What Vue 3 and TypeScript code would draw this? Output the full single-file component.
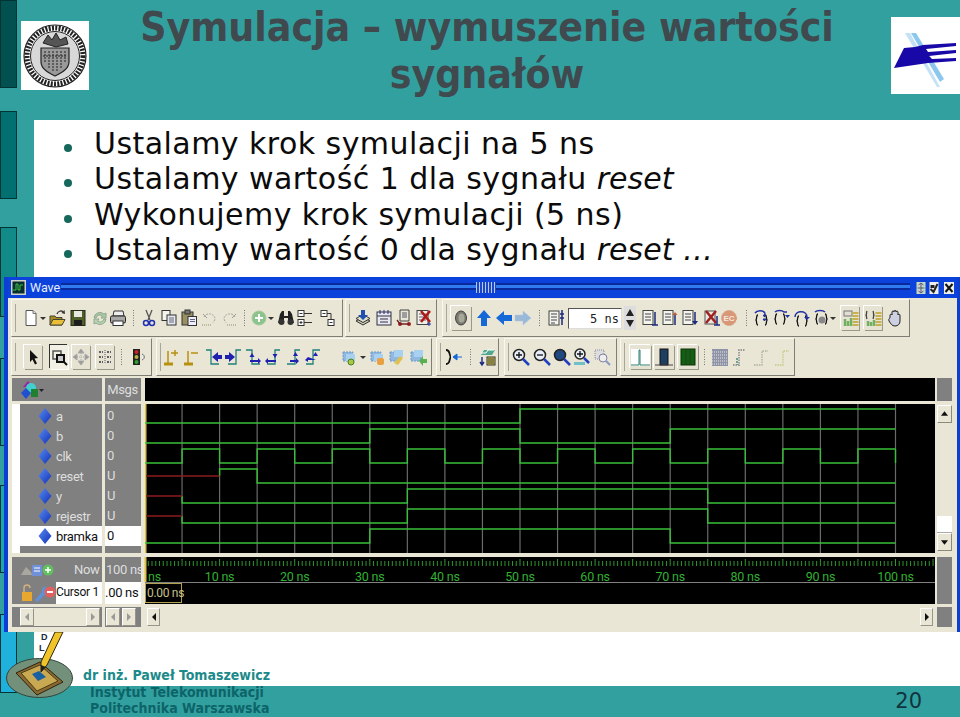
<script setup lang="ts">
interface Item { x: number; i: string; w?: number; c?: string }
interface Group { x: number; end: number; items: Item[] }

const I: Record<string, string> = {
  new: '<path d="M4 1.500h7l3 3v12H4z" fill="#fff" stroke="#555"/><path d="M11 1.500v3h3" fill="#ddd" stroke="#777"/>',
  drop: '<path d="M1 8h6l-3 3z" fill="#333"/>',
  open: '<path d="M2 7h5l1 1.500h6V16H2z" fill="#a88a20" stroke="#443"/><path d="M5 10.500h12l-3 5.500H2z" fill="#e9bf3a" stroke="#443"/><path d="M9 5c1-3 4-3.500 6-2.500" fill="none" stroke="#333" stroke-width="1.300"/><path d="M16.500 1l.5 4-3.500-1z" fill="#333"/>',
  save: '<rect x="2" y="1.500" width="14" height="15" fill="#4f5f2a" stroke="#2a2a1a"/><rect x="5" y="2" width="8" height="6" fill="#e8e8e0"/><rect x="5" y="11" width="8" height="5.500" fill="#1c1c1c"/>',
  reload: '<path d="M3 9a6 6 0 0 1 10-4l2-1v5h-5l1.500-2A4 4 0 0 0 5 9z" fill="#a8c8a0" stroke="#90a890"/><path d="M15 10a6 6 0 0 1-10 4l-2 1v-5h5l-1.500 2A4 4 0 0 0 13 10z" fill="#b8d4b0" stroke="#90a890"/>',
  print: '<path d="M5 2h9l1 5H4z" fill="#eee" stroke="#333"/><rect x="1.500" y="7" width="15" height="7" rx="1.500" fill="#a8a8a8" stroke="#222"/><rect x="4" y="12" width="10" height="4.500" fill="#fff" stroke="#333"/>',
  sep: '<path d="M1.500 1v16" stroke="#777" stroke-dasharray="1 1.500"/>',
  cut: '<path d="M6 1l4 10M12 1L8 11" stroke="#555" stroke-width="1.300"/><circle cx="6" cy="14" r="2.500" fill="none" stroke="#2030b0" stroke-width="1.500"/><circle cx="12" cy="14" r="2.500" fill="none" stroke="#2030b0" stroke-width="1.500"/>',
  copy: '<rect x="2" y="1.500" width="8" height="10" fill="#f4f4ea" stroke="#333"/><rect x="7" y="6" width="9" height="10" fill="#e4e8f0" stroke="#333"/><path d="M9 9h5M9 11h5M9 13h5" stroke="#667"/>',
  paste: '<rect x="2" y="3" width="11" height="13" fill="#9a9060" stroke="#333"/><rect x="5" y="1" width="5" height="4" fill="#777" stroke="#333"/><rect x="8" y="7.500" width="8.500" height="9" fill="#eef" stroke="#333"/><path d="M10 10.500h5M10 12.500h5" stroke="#667"/>',
  undo: '<path d="M3 8a6 6 0 0 1 11 1c0 2-1 3.500-2 4.500" fill="none" stroke="#aaa09a" stroke-dasharray="2 1"/><path d="M2 5l4 4" stroke="#a09a9a"/><path d="M1 16h10" stroke="#b0a890" stroke-width="1.500" stroke-dasharray="1 1"/>',
  redo: '<path d="M15 8a6 6 0 0 0-11 1c0 2 1 3.500 2 4.500" fill="none" stroke="#aaa09a" stroke-dasharray="2 1"/><path d="M16 5l-4 4" stroke="#a09a9a"/><path d="M7 16h10" stroke="#b0a890" stroke-width="1.500" stroke-dasharray="1 1"/>',
  add: '<circle cx="9" cy="9" r="7" fill="#8ac48a" stroke="#a8c8a0"/><path d="M9 5v8M5 9h8" stroke="#fff" stroke-width="2"/>',
  binoc: '<path d="M3 5l2-3h2v5h4V2h2l2 3 2 9H11V9H7v5H1z" fill="#222"/><circle cx="4.500" cy="13" r="3" fill="#333"/><circle cx="13.500" cy="13" r="3" fill="#333"/>',
  tree1: '<rect x="2" y="1.500" width="6" height="6" fill="#fff" stroke="#333"/><rect x="2" y="10.500" width="6" height="6" fill="#fff" stroke="#333"/><path d="M3.500 4.500h3M3.500 13.500h3M5 12v3M8 4.500h8M8 13.500h8" stroke="#333"/>',
  tree2: '<rect x="2" y="1.500" width="6" height="6" fill="#fff" stroke="#333"/><rect x="9" y="10.500" width="6" height="6" fill="#fff" stroke="#333"/><path d="M3.500 4.500h3M10.500 13.500h3M8 4.500h4v6" fill="none" stroke="#333"/>',
  stack: '<path d="M2 12l7-4 7 4-7 4z" fill="#c8c8b0" stroke="#333"/><path d="M2 9.500l7-4 7 4-7 4z" fill="#e0e0d0" stroke="#333"/><path d="M7 1h4v5h3l-5 5-5-5h3z" fill="#2050b0"/>',
  cal: '<rect x="2" y="3" width="14" height="13" fill="#e8e8f0" stroke="#334"/><path d="M2 7h14M5 10h8M5 13h8" stroke="#334"/><path d="M5 1v4M9 1v4M13 1v4" stroke="#223080"/>',
  cart: '<path d="M5 1h9v11H5z" fill="#e8e8d8" stroke="#444"/><path d="M7 4h5M7 6h5M7 8h5" stroke="#556"/><circle cx="5" cy="15" r="2" fill="#a02020"/><circle cx="14" cy="15" r="2" fill="#a02020"/><path d="M2 11l3 4h9" fill="none" stroke="#702020" stroke-width="1.300"/>',
  delx: '<rect x="2" y="1.500" width="11" height="14" fill="#f0f0e8" stroke="#444"/><path d="M4 5h7M4 8h7M4 11h7" stroke="#667"/><path d="M6 2l9 11M15 2L6 13" stroke="#b01818" stroke-width="2.500"/><path d="M14 13v4M12 15h4" stroke="#2030a0"/>',
  gear: '<ellipse cx="10" cy="9" rx="5.500" ry="7" fill="#7a7a70" stroke="#444"/><ellipse cx="10.500" cy="9" rx="3" ry="4.500" fill="#a8a89a"/>',
  up: '<path d="M9 1l7 8h-4v8H6V9H2z" fill="#1468d8"/>',
  left: '<path d="M1 9l8-7v4h8v6H9v4z" fill="#1468d8"/>',
  right: '<path d="M17 9L9 2v4H1v6h8v4z" fill="#9ab8d8" stroke="#b0c8e0" stroke-dasharray="1 1"/>',
  list: '<rect x="2" y="2" width="10" height="14" fill="#f4f4ea" stroke="#444"/><path d="M4 5h6M4 8h6M4 11h6M4 14h4" stroke="#445"/><path d="M15 1v15M13 5h4M13 9h4" stroke="#1a2a80" stroke-width="1.500"/>',
  ld1: '<rect x="2" y="1.500" width="10" height="14" fill="#f4f4ea" stroke="#444"/><path d="M4 5h6M4 8h6M4 11h6" stroke="#445"/><path d="M14 3v13M11 16h6" stroke="#1a2a80" stroke-width="1.500"/>',
  ld2: '<rect x="2" y="1.500" width="10" height="14" fill="#f4f4ea" stroke="#444"/><path d="M4 5h6M4 8h6M4 11h6" stroke="#445"/><path d="M14 3l2.500 3h-5z" fill="#c06030"/><path d="M14 6v10" stroke="#1a2a80" stroke-width="1.500"/>',
  ld3: '<rect x="2" y="1.500" width="10" height="14" fill="#f4f4ea" stroke="#444"/><path d="M4 5h6M4 8h6M4 11h6" stroke="#445"/><path d="M14 3v10" stroke="#1a2a80" stroke-width="1.500"/><path d="M14 16l3-4h-6z" fill="#1a2a80"/>',
  ld4: '<rect x="2" y="2" width="10" height="13" fill="#e8e8e0" stroke="#555"/><path d="M3 2l10 12M13 2L3 14" stroke="#a02020" stroke-width="2.500"/><path d="M14 7v9M11 16h6" stroke="#1a2a80" stroke-width="1.500"/>',
  ec: '<circle cx="9" cy="9" r="7.500" fill="#d89878" stroke="#d8a080" stroke-dasharray="2 1"/><text x="9" y="12" font-size="8" font-family="Liberation Sans" font-weight="700" text-anchor="middle" fill="#f4e8e0">EC</text>',
  st1: '<path d="M2 4c2-3 8-3 10 0" fill="none" stroke="#2030a0" stroke-width="1.500"/><path d="M5 6c-2 0-1 4-2 5 1 1 0 5 2 5M12 6c2 0 1 4 2 5-1 1 0 5-2 5" fill="none" stroke="#111" stroke-width="1.300"/><path d="M12 4v4l-2-1.500M10 10h3l-1.500 2z" fill="#2030a0" stroke="#2030a0"/>',
  st2: '<path d="M3 3c2-2 7-2 9 0h3" fill="none" stroke="#2030a0" stroke-width="1.500"/><path d="M5 5c-2 0-1 4-2 5 1 1 0 5 2 5M11 5c2 0 1 4 2 5-1 1 0 5-2 5" fill="none" stroke="#111" stroke-width="1.300"/><path d="M13 6h5l-2.500 3z" fill="#2030a0"/>',
  st3: '<path d="M7 7c-2 0-1 4-2 5 1 1 0 5 2 5M13 7c2 0 1 4 2 5-1 1 0 5-2 5" fill="none" stroke="#111" stroke-width="1.300"/><path d="M3 8c0-7 12-7 12 0" fill="none" stroke="#2030a0" stroke-width="1.500"/><path d="M12 8h6l-3 3z" fill="#2030a0"/>',
  st4: '<path d="M2 3c2-2 8-2 10 0" fill="none" stroke="#2030a0" stroke-width="1.500"/><path d="M5 5c-2 0-1 4-2 5 1 1 0 5 2 5M12 5c2 0 1 4 2 5-1 1 0 5-2 5" fill="none" stroke="#111" stroke-width="1.300"/><circle cx="9" cy="11" r="3.500" fill="#888"/>',
  bars1: '<rect x="3" y="2" width="8" height="5" fill="#e0e0d0" stroke="#777"/><path d="M13 3v14M16 3v14" stroke="#c8b050" stroke-width="3" stroke-dasharray="2 1"/><path d="M4 10v7M7 12v5M10 9v8" stroke="#70b060" stroke-width="2.500"/>',
  bars2: '<path d="M3 2c-1 2 0 3-1 4 1 1 0 2 1 4M9 2c1 2 0 3 1 4-1 1 0 2-1 4" fill="none" stroke="#444" stroke-width="1.300"/><path d="M13 3v14M16 3v14" stroke="#c8b050" stroke-width="3" stroke-dasharray="2 1"/><path d="M4 12v5M7 13v4M10 11v6" stroke="#70b060" stroke-width="2.500"/>',
  hand: '<path d="M4 9V6c0-1 2-1 2 0V3c0-1.500 2-1.500 2 0v-.5c0-1.500 2-1.500 2 0V3c0-1.500 2-1 2 0v3c0-1 2-1 2 0v6c0 3-2 5-5 5s-4-2-6-5c-1-2 1-3 1-3z" fill="#ccd0e0" stroke="#222"/>',
  arrow: '<path d="M6 2l8 8-3.500.5 2.500 5-2 1-2.500-5L6 14z" fill="#111"/>',
  zbox: '<rect x="3" y="3" width="8" height="8" fill="none" stroke="#555" stroke-width="1.500"/><rect x="7" y="7" width="7" height="7" fill="#ccc" stroke="#111" stroke-width="2"/><path d="M14 14l3 3" stroke="#111" stroke-width="2"/>',
  move: '<path d="M9 1l3 4H6zM9 17l3-4H6zM1 9l4-3v6zM17 9l-4-3v6z" fill="#999" stroke="#aaa"/><path d="M9 5v8M5 9h8" stroke="#aaa" stroke-dasharray="1 1"/>',
  step: '<path d="M9 2v14" stroke="#556" stroke-dasharray="1 1"/><path d="M3 4h4M3 9h4M3 14h4M11 4h4M11 9h4M11 14h4" stroke="#334" stroke-dasharray="2 1" stroke-width="1.500"/>',
  light: '<rect x="4" y="1" width="7" height="16" fill="#222"/><circle cx="7.500" cy="4" r="2" fill="#d02020"/><circle cx="7.500" cy="9" r="2" fill="#b8b040"/><circle cx="7.500" cy="14" r="2" fill="#30a030"/><path d="M13 6c3 1 3 5 0 6" fill="#eee" stroke="#666"/>',
  ev1: '<path d="M1 16h9" stroke="#b89010" stroke-width="3"/><path d="M5 15V3" stroke="#b89010" stroke-width="1.500"/><path d="M8 5h7M12 2v6" stroke="#b89010" stroke-width="1.500"/>',
  ev2: '<path d="M1 16h9" stroke="#b89010" stroke-width="3"/><path d="M5 15V3" stroke="#b89010" stroke-width="1.500"/><path d="M8 5h7" stroke="#b89010" stroke-width="1.500"/>',
  ed1: '<path d="M1 2h5v14h8" fill="none" stroke="#20807a" stroke-width="1.300"/><path d="M7 9l6-5v3h4v4h-4v3z" fill="#2020b0"/>',
  ed2: '<path d="M17 2h-5v14H4" fill="none" stroke="#20807a" stroke-width="1.300"/><path d="M11 9L5 4v3H1v4h4v3z" fill="#2020b0"/>',
  ed3: '<path d="M2 2h6v14h8" fill="none" stroke="#20807a" stroke-width="1.300"/><path d="M8 5l2.500 4H5.500zM6 12h8v-2l3 3-3 3v-2H6z" fill="#2020b0"/>',
  ed4: '<path d="M16 2h-5v14H3" fill="none" stroke="#20807a" stroke-width="1.300"/><path d="M11 10l2.500-4h-5zM12 12H4v-2l-3 3 3 3v-2h8z" fill="#2020b0"/>',
  ed5: '<path d="M16 2h-5v14H3" fill="none" stroke="#20807a" stroke-width="1.300"/><path d="M9 8l2.500-4L14 8zM6 12h6v-2l3 3-3 3v-2H6z" fill="#2020b0"/>',
  ed6: '<path d="M2 16h7V2h7" fill="none" stroke="#20807a" stroke-width="1.300"/><path d="M9 8l2.500-4L14 8zM12 12H4v2l-3-2 3-3zm1 0" fill="#2020b0"/>',
  ci1: '<path d="M1 4h10v9H1z" fill="#90b8e0" stroke="#7098c8" stroke-dasharray="2 1"/><path d="M4 6h9v7H4z" fill="#a8d0f0"/><circle cx="9" cy="14" r="3" fill="#a8c848" stroke="#488020"/>',
  ci2: '<path d="M1 4h10v9H1z" fill="#90b8e0" stroke="#7098c8" stroke-dasharray="2 1"/><path d="M4 6h9v7H4z" fill="#a8d0f0"/><rect x="7" y="10" width="7" height="7" rx="2" fill="#e8a040"/>',
  ci3: '<path d="M1 4h10v9H1z" fill="#90b8e0" stroke="#7098c8" stroke-dasharray="2 1"/><path d="M5 2h9v7H5z" fill="#a8d0f0"/><path d="M5 15l6-7 3 2-5 7z" fill="#e0c050"/>',
  ci4: '<path d="M1 4h10v9H1z" fill="#90b8e0" stroke="#7098c8" stroke-dasharray="2 1"/><path d="M4 2h9v7H4z" fill="#a8d0f0"/><path d="M9 13l4-5v3h4v4h-4v3z" fill="#58b050"/>',
  cmb: '<path d="M1 2c5 0 3 7 5 7-2 0 0 7-5 7" fill="none" stroke="#111" stroke-width="1.800"/><path d="M8 9h9M8 9l4-3v6z" fill="#1468d8" stroke="#1468d8"/>',
  wav: '<path d="M3 7l3-5h11l-3 5z" fill="#50a890"/><path d="M3 5h5l2-3h6" fill="none" stroke="#fff"/><rect x="9" y="9" width="8" height="8" fill="#e0d050" stroke="#333"/><path d="M4 9v8M2 14l2 3 2-3" stroke="#1a2a80" fill="none" stroke-width="1.400"/><path d="M10 11h6M10 13h6M10 15h6" stroke="#333"/>',
  zin: '<circle cx="7" cy="7" r="5.500" fill="#e8eef8" stroke="#222" stroke-width="1.500"/><path d="M4 7h6M7 4v6" stroke="#111" stroke-width="1.300"/><path d="M11 11l6 6" stroke="#2040c0" stroke-width="2.500"/>',
  zout: '<circle cx="7" cy="7" r="5.500" fill="#e8eef8" stroke="#222" stroke-width="1.500"/><path d="M4 7h6" stroke="#111" stroke-width="1.300"/><path d="M11 11l6 6" stroke="#2040c0" stroke-width="2.500"/>',
  zfull: '<circle cx="7" cy="7" r="5.500" fill="#204880" stroke="#222" stroke-width="1.500"/><path d="M11 11l6 6" stroke="#2040c0" stroke-width="2.500"/>',
  zcur: '<circle cx="7" cy="6" r="5" fill="#e8eef8" stroke="#222" stroke-width="1.500"/><path d="M4 6h6M7 3v6" stroke="#111" stroke-width="1.300"/><path d="M11 10l5 5" stroke="#2040c0" stroke-width="2.500"/><rect x="1" y="14" width="11" height="3" fill="#70c0c8"/>',
  zsel: '<rect x="2" y="2" width="9" height="9" fill="#ddd" stroke="#8888a0" stroke-dasharray="1 1"/><circle cx="10" cy="10" r="4" fill="#eee" stroke="#8080a0"/><path d="M13 13l4 4" stroke="#8898c8" stroke-width="2"/>',
  pulse: '<rect x="1" y="1" width="19" height="17" fill="#fff"/><path d="M1 17h8V2h1v15h10" fill="none" stroke="#308070"/>',
  tall: '<rect x="6" y="1" width="8" height="16" fill="#1f3f60" stroke="#111"/><path d="M1 17h18" stroke="#444"/>',
  green: '<rect x="3" y="1" width="14" height="16" fill="#106010" stroke="#0a300a"/><path d="M8 1v16M12 1v16" stroke="#2a3a2a"/>',
  dots: '<rect x="1" y="1" width="16" height="17" fill="#7880a0" opacity=".8"/><path d="M1 4h16M1 7h16M1 10h16M1 13h16M1 16h16" stroke="#e8e8d8" stroke-dasharray="1 1"/>',
  ed7: '<path d="M1 17h6V2h6" fill="none" stroke="#999" stroke-width="1.800" stroke-dasharray="1.500 1"/><path d="M5 10v7" stroke="#70a090" stroke-width="2" stroke-dasharray="2 1"/>',
  ed8: '<path d="M1 17h8V3h6" fill="none" stroke="#a8b098" stroke-width="1.300" stroke-dasharray="1.500 1"/>',
  ed9: '<path d="M1 17h8V3h6" fill="none" stroke="#c8c880" stroke-width="1.300" stroke-dasharray="1.500 1"/>'
}

const row1: Group[] = [
  { x: 11, end: 343, items: [
    { x: 31, i: 'new' }, { x: 43, i: 'drop', w: 8 }, { x: 57, i: 'open' }, { x: 78, i: 'save' }, { x: 100, i: 'reload' },
    { x: 118, i: 'print' }, { x: 133, i: 'sep', w: 3 }, { x: 149, i: 'cut' }, { x: 169, i: 'copy' }, { x: 189, i: 'paste' },
    { x: 210, i: 'undo' }, { x: 229, i: 'redo' }, { x: 244, i: 'sep', w: 3 }, { x: 259, i: 'add' }, { x: 271, i: 'drop', w: 8 },
    { x: 286, i: 'binoc' }, { x: 305, i: 'tree1' }, { x: 328, i: 'tree2' }
  ] },
  { x: 345, end: 437, items: [{ x: 363, i: 'stack' }, { x: 384, i: 'cal' }, { x: 404, i: 'cart' }, { x: 424, i: 'delx' }] },
  { x: 442, end: 910, items: [
    { x: 461, i: 'gear', w: 20, c: 'raised' }, { x: 484, i: 'up' }, { x: 504, i: 'left' }, { x: 523, i: 'right' }, { x: 539, i: 'sep', w: 3 }, { x: 556, i: 'list' },
    { x: 595, i: 'FIELD', w: 54 }, { x: 630, i: 'SPIN', w: 12 },
    { x: 650, i: 'ld1' }, { x: 670, i: 'ld2' }, { x: 690, i: 'ld3' }, { x: 712, i: 'ld4' }, { x: 729, i: 'ec' }, { x: 746, i: 'sep', w: 3 },
    { x: 762, i: 'st1' }, { x: 781, i: 'st2' }, { x: 801, i: 'st3' }, { x: 822, i: 'st4' }, { x: 833, i: 'drop', w: 8 },
    { x: 850, i: 'bars1', c: 'raised' }, { x: 873, i: 'bars2', c: 'raised' }, { x: 895, i: 'hand' }
  ] }
]
const row2: Group[] = [
  { x: 11, end: 152, items: [
    { x: 33, i: 'arrow', c: 'raised' }, { x: 59, i: 'zbox', c: 'pressed' }, { x: 81, i: 'move', c: 'raised' }, { x: 105, i: 'step', c: 'raised' },
    { x: 121, i: 'sep', w: 3 }, { x: 138, i: 'light' }
  ] },
  { x: 156, end: 432, items: [
    { x: 172, i: 'ev1' }, { x: 192, i: 'ev2' }, { x: 214, i: 'ed1' }, { x: 233, i: 'ed2' }, { x: 253, i: 'ed3' }, { x: 273, i: 'ed4' }, { x: 293, i: 'ed5' }, { x: 313, i: 'ed6' },
    { x: 351, i: 'ci1' }, { x: 363, i: 'drop', w: 8 }, { x: 379, i: 'ci2' }, { x: 398, i: 'ci3' }, { x: 419, i: 'ci4' }
  ] },
  { x: 436, end: 499, items: [{ x: 454, i: 'cmb' }, { x: 470, i: 'sep', w: 3 }, { x: 487, i: 'wav' }] },
  { x: 504, end: 617, items: [{ x: 521, i: 'zin' }, { x: 542, i: 'zout' }, { x: 562, i: 'zfull' }, { x: 582, i: 'zcur' }, { x: 602, i: 'zsel' }] },
  { x: 620, end: 795, items: [
    { x: 640, i: 'pulse', w: 21, c: 'raised' }, { x: 664, i: 'tall', w: 20, c: 'raised' }, { x: 688, i: 'green', w: 20, c: 'raised' }, { x: 704, i: 'sep', w: 3 },
    { x: 720, i: 'dots' }, { x: 741, i: 'ed7' }, { x: 762, i: 'ed8' }, { x: 783, i: 'ed9' }
  ] }
]

function place(g: Group) {
  let edge = g.x + 1
  return g.items.map((it) => {
    const w = it.w ?? 18
    const left = it.x - w / 2
    const out = { ...it, w, ml: left - edge }
    edge = left + w
    return out
  })
}
const rows = [row1, row2].map((r) => {
  let edge = 11
  return r.map((g) => {
    const out = { ...g, ml: g.x - edge, width: g.end - g.x, cells: place(g) }
    edge = g.end
    return out
  })
})

const X = (n: number) => 144.5 + 37.55 * n
const grid = Array.from({ length: 20 }, (_, k) => X(k + 1))

interface Sig { hi: number; lo: number; red?: [number, number]; start: number; level: boolean; flips: number[] }
const clkFlips = Array.from({ length: 19 }, (_, k) => k + 1)
const sigs: Sig[] = [
  { hi: 409, lo: 423, start: 0, level: false, flips: [10] },
  { hi: 429, lo: 443, start: 0, level: false, flips: [6, 10, 14] },
  { hi: 449, lo: 463, start: 0, level: false, flips: clkFlips },
  { hi: 469, lo: 483, red: [2, 476], start: 2, level: true, flips: [3] },
  { hi: 489, lo: 503, red: [1, 496], start: 1, level: false, flips: [7, 15] },
  { hi: 509, lo: 523, red: [1, 516], start: 1, level: false, flips: [7, 15] },
  { hi: 529, lo: 543, start: 0, level: false, flips: [6, 14] }
]
const greens = sigs.map((s) => {
  let level = s.level
  let d = s.red ? `M${X(s.start)} ${s.red[1]}V${level ? s.hi : s.lo}` : `M${X(s.start)} ${level ? s.hi : s.lo}`
  for (const f of s.flips) {
    level = !level
    d += `H${X(f)}V${level ? s.hi : s.lo}`
  }
  d += `H${X(20)}`
  return d
})
const clkEnd = `M${X(20)} 449V463`
const reds = sigs.filter((s) => s.red).map((s) => `M146 ${s.red![1]}H${X(s.red![0])}`)

const ticks = Array.from({ length: 210 }, (_, k) => {
  const x = 144.5 + 3.755 * (k + 1)
  return `M${x} ${k % 10 === 9 ? 559 : 561}V566`
}).join('')
const labels = [10, 20, 30, 40, 50, 60, 70, 80, 90, 100].map((v, k) => ({ t: `${v} ns`, x: X(2 * (k + 1)) }))

const names = ['a', 'b', 'clk', 'reset', 'y', 'rejestr', 'bramka']
const values = ['0', '0', '0', 'U', 'U', 'U', '0']
const bullets = ['Ustalamy krok symulacji na 5 ns', 'Ustalamy wartość 1 dla sygnału ', 'Wykonujemy krok symulacji (5 ns)', 'Ustalamy wartość 0 dla sygnału ']
const tails = ['', 'reset', '', 'reset …']
</script>

<template>
  <div class="slide">
    <div class="rail">
      <i class="bar b1"></i><i class="bar b2"></i><i class="bar b3"></i><i class="bar b4"></i><i class="bar b5"></i><i class="bar b6"></i>
    </div>

    <header class="head">
      <svg class="seal" viewBox="0 0 68 69">
        <rect width="68" height="69" fill="#fff" />
        <circle cx="34" cy="35" r="31" fill="none" stroke="#222" stroke-width="1.200" />
        <circle cx="34" cy="35" r="28" fill="none" stroke="#222" stroke-width="5" stroke-dasharray="2 1.300" />
        <circle cx="34" cy="35" r="24.500" fill="#d8d8d8" stroke="#222" />
        <path d="M20 27h28v14c0 7-8 11-14 14-6-3-14-7-14-14z" fill="#999" stroke="#222" stroke-width="1.200" />
        <path d="M24 30v12M28 30v17M32 30v20M36 30v20M40 30v17M44 30v12M22 35h24" stroke="#222" stroke-dasharray="2 1" />
        <path d="M22 22l5-8 4 5 4-7 4 7 6-3 2 7-12 3z" fill="#555" stroke="#222" />
      </svg>
      <h1 class="title">Symulacja – wymuszenie wartości sygnałów</h1>
      <svg class="mark" viewBox="0 0 69 77">
        <rect width="69" height="77" fill="#fff" />
        <path d="M14 16h5l30 54h-3z" fill="#c4e2f6" />
        <path d="M20 16h5l28 46-4 3z" fill="#8cc8ee" />
        <path d="M3 51l10-20 11-1 8-2 33-2v3l-30 3 2 3 28-2v3l-27 3 3 3 24-1v3l-28 2z" fill="#1808a8" />
      </svg>
    </header>

    <main class="body">
      <ul class="points">
        <li v-for="(b, k) in bullets" :key="k"><i class="dot"></i><span>{{ b }}<em>{{ tails[k] }}</em></span></li>
      </ul>

      <section class="win">
        <div class="titlebar">
          <svg class="appicon" viewBox="0 0 15 15">
            <rect width="15" height="15" fill="#d0d0c8" />
            <rect x="1.500" y="1.500" width="12" height="12" fill="#063030" />
            <path d="M2 10h3V4h2v6h2V5h3" fill="none" stroke="#40c040" />
          </svg>
          <span class="wintitle">Wave</span>
          <div class="stripes"><i class="grip"></i></div>
          <div class="winbtns">
            <svg viewBox="0 0 9 12"><rect width="9" height="12" fill="#c8d8c8" /><path d="M4.500 1v10M1 6h7" stroke="#557" /><path d="M2 3l2.500-2L7 3M2 9l2.500 2L7 9" fill="none" stroke="#557" /></svg>
            <svg viewBox="0 0 9 12"><rect width="9" height="12" fill="#eee" /><path d="M1 7l3 3 4-8" fill="none" stroke="#222" stroke-width="2" /><rect x="1" y="3" width="4" height="3" fill="#222" /></svg>
            <svg class="close" viewBox="0 0 10 12"><rect width="10" height="12" fill="#eee" /><path d="M1.500 2l7 8M8.500 2l-7 8" stroke="#111" stroke-width="2" /></svg>
          </div>
        </div>

        <div class="tools">
          <div v-for="(row, r) in rows" :key="r" class="toolrow">
            <div v-for="(g, n) in row" :key="n" class="toolgroup" :style="{ marginLeft: g.ml + 'px', width: g.width + 'px' }">
              <template v-for="(c, m) in g.cells" :key="m">
                <div v-if="c.i === 'FIELD'" class="field" :style="{ marginLeft: c.ml + 'px', width: c.w + 'px' }">5 ns</div>
                <div v-else-if="c.i === 'SPIN'" class="spin" :style="{ marginLeft: c.ml + 'px', width: c.w + 'px' }">
                  <svg viewBox="0 0 12 24"><rect width="12" height="24" fill="#ddd" /><path d="M6 3l4 7H2zM6 21l4-7H2z" fill="#222" /></svg>
                </div>
                <svg v-else class="tool" :class="c.c" :style="{ marginLeft: c.ml + 'px', width: c.w + 'px' }" :viewBox="`0 0 ${c.w} 18`" v-html="I[c.i]"></svg>
              </template>
            </div>
          </div>
        </div>

        <div class="panes">
          <div class="cell dark headcell">
            <svg class="palette" viewBox="0 0 24 20"><path d="M8 1l5 6H3z" fill="#a020a0" /><circle cx="11" cy="8" r="5" fill="#40d0d0" /><rect x="11" y="9" width="7" height="8" fill="#208030" /><path d="M6 8l5 5-5 6-5-6z" fill="#2050d0" /><path d="M19 9h5l-2.500 3z" fill="#222" /></svg>
          </div>
          <div></div>
          <div class="cell dark msgs">Msgs</div>
          <div></div>
          <div class="cell black"></div>
          <div></div>
          <div class="cell dark"></div>
          <div></div>

          <div class="rowgap"></div>

          <div class="cell dark namelist">
            <div v-for="(n, k) in names" :key="n" class="namerow" :class="{ sel: n === 'bramka' }">
              <svg class="diamond" viewBox="0 0 14 18">
                <defs><linearGradient :id="'dg' + k" x1="0" y1="0" x2="1" y2="1"><stop offset="0" stop-color="#5a8cf0" /><stop offset="1" stop-color="#1030b8" /></linearGradient></defs>
                <path d="M7 1l6.500 8L7 17 .5 9z" :fill="`url(#dg${k})`" />
              </svg>
              <span>{{ n }}</span>
            </div>
          </div>
          <div></div>
          <div class="cell dark vallist">
            <div v-for="(v, k) in values" :key="k" class="valrow" :class="{ sel: k === 6 }">{{ v }}</div>
          </div>
          <div></div>
          <svg class="cell waves" viewBox="145 404 790 149">
            <rect x="145" y="404" width="790" height="149" fill="#000" />
            <path v-for="g in grid" :key="g" :d="`M${g} 404V553`" stroke="#6a6a6a" stroke-width="1.200" />
            <path d="M145.500 404V553" stroke="#e0c040" stroke-width="2" />
            <path v-for="(d, k) in greens" :key="k" :d="d" fill="none" stroke="#38c038" stroke-width="1.400" />
            <path :d="clkEnd" fill="none" stroke="#38c038" stroke-width="1.400" />
            <path v-for="(d, k) in reds" :key="'r' + k" :d="d" fill="none" stroke="#8c1c1c" stroke-width="1.600" />
          </svg>
          <div></div>
          <div class="vscroll">
            <button class="sb"><svg viewBox="0 0 14 18"><path d="M7 6l4 5H3z" fill="#111" /></svg></button>
            <div class="vtrack"></div>
            <div class="vthumb"></div>
            <button class="sb"><svg viewBox="0 0 14 18"><path d="M7 12l4-5H3z" fill="#111" /></svg></button>
          </div>
          <div></div>

          <div class="rowgap"></div>

          <div class="cell dark nowcell">
            <svg class="mini" viewBox="0 0 34 16"><path d="M1 13l5-8 5 5 1 3z" fill="#a8a8a0" /><rect x="12" y="3" width="10" height="11" fill="#7090d8" /><path d="M14 6h6M14 9h6" stroke="#fff" /><circle cx="28" cy="8" r="5.500" fill="#60c060" /><path d="M25 8h6M28 5v6" stroke="#fff" stroke-width="1.500" /></svg>
            <span class="now">Now</span>
          </div>
          <div></div>
          <div class="cell dark nowval">100 ns</div>
          <div></div>
          <div class="cell rulerbox">
            <svg class="ruler" viewBox="145 557 790 25">
              <rect x="145" y="557" width="790" height="25" fill="#000" />
              <path :d="ticks" stroke="#2d962d" stroke-width="1" />
              <path d="M145.500 557V582" stroke="#e0c040" stroke-width="2" />
              <text x="148" y="581" class="rtext">ns</text>
              <text v-for="l in labels" :key="l.t" :x="l.x" y="581" text-anchor="middle" class="rtext">{{ l.t }}</text>
            </svg>
          </div>
          <div></div>
          <div class="cell dark sidefill"></div>
          <div></div>

          <div class="cell dark curcell">
            <svg class="mini2" viewBox="0 0 36 20"><rect x="2" y="9" width="10" height="9" fill="#e8a830" /><path d="M4 9V5c0-4 6-4 6 0" fill="none" stroke="#d0b080" stroke-width="1.500" /><path d="M15 17l7-8c-1-4 2-6 5-5l-3 3 2 2 3-2c0 4-3 6-5 5l-6 7z" fill="#6090d8" /><circle cx="30" cy="9" r="5.500" fill="#e06060" /><path d="M27 9h6" stroke="#fff" stroke-width="2" /></svg>
            <span class="curname">Cursor 1</span>
          </div>
          <div></div>
          <div class="cell curval">.00 ns</div>
          <div></div>
          <div class="cell curwave"><span class="curtag">0.00 ns</span></div>
          <div></div>
          <div class="cell dark sidefill"></div>
          <div></div>

          <div class="rowgap"></div>

          <div class="cell dark hs hsname"><i class="hb"><b class="al"></b></i><i class="ht"></i><i class="hb"><b class="ar"></b></i></div>
          <div></div>
          <div class="cell dark hs hsval"><i class="hb"><b class="al"></b></i><i class="hb"><b class="ar"></b></i></div>
          <div></div>
          <div class="hs hswave"><i class="hb main"><b class="al dk"></b></i><i class="ht"></i><i class="hb main"><b class="ar dk"></b></i></div>
          <div></div>
          <div class="cell dark"></div>
          <div></div>
        </div>
      </section>
    </main>

    <footer class="foot">
      <div class="credits">
        <div class="c1">dr inż. Paweł Tomaszewicz</div>
        <div class="c2">Instytut Telekomunikacji</div>
        <div class="c2">Politechnika Warszawska</div>
      </div>
      <div class="pagenum">20</div>
    </footer>

    <svg class="pencil" viewBox="0 0 80 70">
      <ellipse cx="39.500" cy="46" rx="33" ry="19.500" fill="#72907a" stroke="#33463a" />
      <path d="M16 41l24-11 23 20-26 13z" fill="#8a6a30" stroke="#2a2010" />
      <path d="M21 41l19-8 18 16-21 10z" fill="#c8a850" stroke="#4a3a18" />
      <path d="M32 42l7-3 7 6-8 4z" fill="#1a60a0" />
      <path d="M55 0h8L47 33l-6 7 0-10z" fill="#f0c428" stroke="#2a2410" />
      <path d="M41 40l0-7 5 2z" fill="#222" />
      <text x="41" y="8" class="dl">D</text>
      <text x="39" y="19" class="dl">L</text>
    </svg>
  </div>
</template>

<style>
html, body { margin: 0; background: #33a0a0; }
</style>

<style scoped>
.slide {
  position: relative;
  width: 960px;
  height: 717px;
  overflow: hidden;
  background: #33a0a0;
  display: grid;
  grid-template-columns: 34px 1fr;
  grid-template-rows: 120px 566px 31px;
  font-family: "DejaVu Sans", sans-serif;
}
.rail { grid-column: 1; grid-row: 1 / -1; z-index: 1; display: flex; flex-direction: column; width: 18px; }
.bar { display: block; width: 17px; box-sizing: border-box; border: 1px solid #023434; flex: none; }
.b1 { height: 88px; background: #025050; }
.b2 { height: 88px; margin-top: 23px; background: #027070; }
.b3 { height: 90px; margin-top: 28px; background: #128a88; }
.b4 { height: 88px; margin-top: 41px; background: #1a9a9a; }
.b5 { height: 88px; margin-top: 39px; background: #1ea4ae; }
.b6 { height: 79px; margin-top: 41px; background: #20b0dc; }

.head { grid-column: 2; grid-row: 1; display: flex; align-items: flex-start; }
.seal { width: 68px; height: 69px; margin: 21px 0 0 -13px; flex: none; }
.title {
  flex: 1;
  margin: 4px 6px 0 0;
  text-align: center;
  font: 700 40.600px/47px "DejaVu Sans Condensed", "DejaVu Sans", sans-serif;
  color: #40494e;
  padding: 0 40px;
}
.mark { width: 69px; height: 77px; margin-top: 17px; flex: none; }

.body { grid-column: 2; grid-row: 2; background: #fff; display: flex; flex-direction: column; }
.points { list-style: none; margin: 0; padding: 6px 0 0 30px; height: 157px; box-sizing: border-box; font-size: 30px; line-height: 35.300px; color: #0b0b0b; letter-spacing: .45px; }
.points li { display: flex; align-items: center; white-space: pre; }
.dot { width: 8px; height: 8px; border-radius: 50%; background: #17685c; margin: 9px 22px 0 0; flex: none; }
.points em { font-style: italic; letter-spacing: 0; }

.win {
  margin-left: -30px;
  height: 355px;
  box-sizing: border-box;
  border-left: 4px solid #0b3fd4;
  border-right: 3px solid #0b3fd4;
  background: #e9e6d6;
  display: flex;
  flex-direction: column;
  font-family: Roboto, sans-serif;
  z-index: 2;
}
.titlebar { height: 21px; flex: none; background: #0b42dc; display: flex; align-items: center; }
.appicon { width: 15px; height: 15px; margin-left: 3px; flex: none; }
.wintitle { margin-left: 4px; width: 31px; color: #e8f0ff; font-size: 12.500px; }
.stripes {
  flex: 1;
  height: 21px;
  display: flex;
  align-items: center;
  justify-content: center;
  background: linear-gradient(to bottom, #0b42dc 0 6px, #0a2a9c 6px 8px, #2f7cf0 8px 11px, #0a2a9c 11px 13px, #0b42dc 13px);
}
.grip { width: 20px; height: 11px; background: repeating-linear-gradient(90deg, #b8c8f0 0 1px, #1848c8 1px 3px); }
.winbtns { display: flex; gap: 3px; width: 44px; flex: none; padding-right: 3px; justify-content: flex-end; }
.winbtns svg { width: 10px; height: 12px; }
.winbtns .close { margin-left: 2px; }

.tools { height: 80px; flex: none; display: flex; flex-direction: column; }
.toolrow { height: 38px; display: flex; flex: none; margin-left: 3px; margin-top: 1px; }
.toolgroup {
  height: 38px;
  flex: none;
  box-sizing: border-box;
  display: flex;
  align-items: center;
  border: 1px solid;
  border-color: #f8f8f0 #7f7e74 #7f7e74 #f8f8f0;
  background: linear-gradient(#a8a698, #a8a698) 3px 4px / 1px 28px no-repeat;
}
.tool { height: 18px; flex: none; overflow: visible; }
.raised { height: 24px; background: #e6e3d2; box-shadow: -1px -1px 0 #fff, 1px 1px 0 #9a9888; }
.pressed { height: 24px; background: #f2f0e4; box-shadow: -1px -1px 0 #333, 1px 1px 0 #fff; }
.field {
  height: 21px;
  flex: none;
  box-sizing: border-box;
  background: #fff;
  border: 1px solid;
  border-color: #555 #ddd #ddd #555;
  text-align: right;
  padding: 2px 2px 0 0;
  font: 12px/16px "DejaVu Sans Mono", monospace;
  color: #222;
}
.spin { height: 24px; flex: none; }
.spin svg { display: block; width: 12px; height: 24px; }

.panes {
  flex: 1;
  margin-left: 4px;
  display: grid;
  grid-template-columns: 90px 3px 36px 4px 790px 2px 15px 1fr;
  grid-template-rows: 23px 3px 149px 4px 25px 22px 3px 20px 5px;
  font-size: 13px;
  letter-spacing: -.3px;
}
.rowgap { grid-column: 1 / -1; }
.cell { min-width: 0; min-height: 0; }
.dark { background: #808080; color: #dedede; }
.black { background: #000; }
.headcell { padding: 0 0 0 8px; display: flex; align-items: center; }
.palette { width: 24px; height: 20px; margin-left: 0; }
.msgs { text-align: right; padding-right: 3px; line-height: 23px; }
.namelist { border-left: 8px solid #fff; box-sizing: border-box; padding-top: 2px; }
.namerow { height: 20px; display: flex; align-items: center; padding-left: 18px; gap: 4px; }
.namerow.sel, .valrow.sel { background: #fff; color: #111; }
.diamond { width: 14px; height: 18px; flex: none; }
.vallist { padding-top: 2px; }
.valrow { height: 20px; line-height: 20px; padding-left: 2px; }
.waves { display: block; width: 790px; height: 149px; }
.vscroll { display: flex; flex-direction: column; height: 149px; padding: 1px 0 2px; box-sizing: border-box; background: #e9e6d6; }
.sb { display: block; height: 18px; padding: 0; flex: none; border: 1px solid; border-color: #fff #8c8a7c #8c8a7c #fff; background: #e9e6d6; }
.sb svg { display: block; width: 100%; height: 100%; }
.vtrack { flex: 1; background: #e9e6d6; }
.vthumb { height: 16px; background: #fff; border-bottom: 1px solid #aaa; }

.nowcell { padding-left: 8px; display: flex; align-items: center; }
.mini { width: 34px; height: 16px; flex: none; }
.now { margin-left: 20px; }
.nowval { line-height: 25px; padding-left: 1px; white-space: nowrap; }
.rulerbox { background: #000; }
.ruler { display: block; width: 790px; height: 25px; overflow: visible; }
.rtext { font: 12.500px Roboto, sans-serif; fill: #33b033; letter-spacing: -.2px; }
.curcell { display: flex; align-items: stretch; padding-left: 8px; }
.mini2 { width: 36px; height: 20px; flex: none; margin-top: 1px; }
.curname { flex: 1; background: #fff; color: #111; line-height: 21px; white-space: nowrap; font-size: 12px; }
.curval { background: #fff; color: #111; line-height: 21px; }
.curwave { background: #000; border-top: 1px solid #808080; box-sizing: border-box; }
.curtag { display: block; width: 37px; height: 20px; box-sizing: border-box; border: 1px solid #b0a050; color: #c8c088; font-size: 12px; line-height: 19px; padding-left: 1px; white-space: nowrap; }

.hs { display: flex; align-items: stretch; }
.hsname { padding: 1px 2px 1px 8px; }
.hsval { padding: 1px 1px; gap: 2px; }
.hswave { padding: 1px 2px; background: #e9e6d6; }
.hb { width: 14px; flex: none; background: #e9e6d6; display: flex; align-items: center; justify-content: center; border: 1px solid; border-color: #fff #97958a #97958a #fff; box-sizing: border-box; }
.hb.main { width: 13px; }
.ht { flex: 1; background: #e9e6d6; }
.al { width: 0; height: 0; border: 4px solid transparent; border-left-width: 0; border-right: 4px solid #999; }
.ar { width: 0; height: 0; border: 4px solid transparent; border-right-width: 0; border-left: 4px solid #999; }
.al.dk { border-right-color: #111; }
.ar.dk { border-left-color: #111; }

.foot { grid-column: 1 / -1; grid-row: 3; display: flex; justify-content: space-between; }
.credits { margin: -19px 0 0 83px; font: 700 14px/16.500px "DejaVu Sans Condensed", "DejaVu Sans", sans-serif; z-index: 1; }
.c1 { color: #1c8a8a; }
.c2 { color: #0d6468; margin-left: 7px; }
.pagenum { margin: 2px 38px 0 0; font-size: 21px; color: #10343e; line-height: 26px; }

.pencil { position: absolute; left: 0; top: 632px; width: 80px; height: 70px; z-index: 3; }
.dl { font: 700 9px "Liberation Sans", sans-serif; fill: #1a2a3a; }
</style>
